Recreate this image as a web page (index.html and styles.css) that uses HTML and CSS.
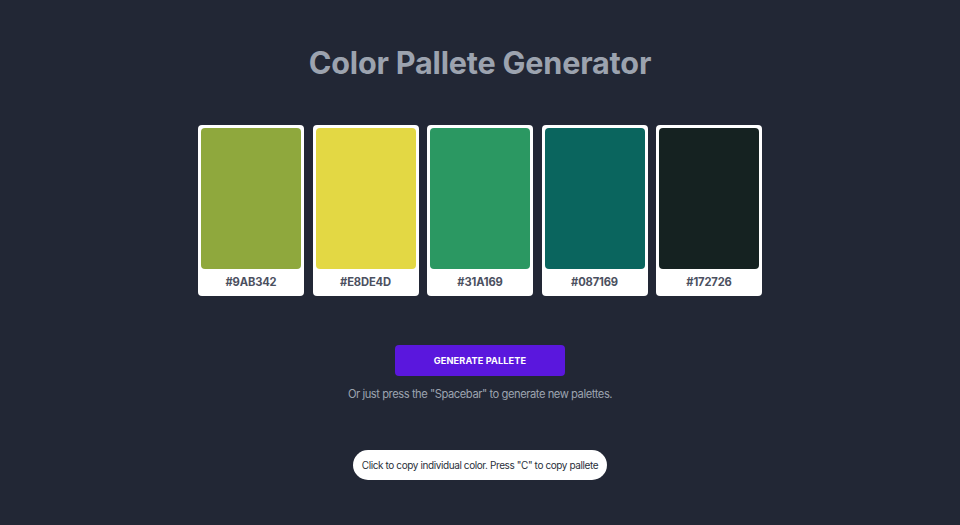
FILE: index.html
```html
<!DOCTYPE html>
<html lang="en">
<head>
<meta charset="utf-8">
<title>Color Pallete Generator</title>
<link rel="stylesheet" href="styles.css">
</head>
<body>
<main class="app">
  <h1 class="title">Color Pallete Generator</h1>
  <div class="palette">
    <div class="card"><div class="swatch" style="background:#8fa83d"></div><div class="hex">#9AB342</div></div>
    <div class="card"><div class="swatch" style="background:#e3d844"></div><div class="hex">#E8DE4D</div></div>
    <div class="card"><div class="swatch" style="background:#2b9862"></div><div class="hex">#31A169</div></div>
    <div class="card"><div class="swatch" style="background:#0a655e"></div><div class="hex">#087169</div></div>
    <div class="card"><div class="swatch" style="background:#152221"></div><div class="hex">#172726</div></div>
  </div>
  <button class="generate">Generate Pallete</button>
  <p class="hint">Or just press the "Spacebar" to generate new palettes.</p>
  <div class="toast">Click to copy individual color. Press "C" to copy pallete</div>
</main>
</body>
</html>
```
FILE: styles.css
```css
html, body {
  margin: 0;
  padding: 0;
  height: 100%;
}
body {
  background: #222735;
  font-family: Inter, "Noto Sans", sans-serif;
}
.app {
  display: flex;
  flex-direction: column;
  align-items: center;
  padding-top: 42px;
}
.title {
  margin: 0;
  font-size: 30.6px;
  line-height: 42px;
  font-weight: 700;
  color: #9ca3af;
  letter-spacing: -0.2px;
}
.palette {
  display: flex;
  gap: 8.5px;
  margin-top: 41px;
}
.card {
  width: 106px;
  height: 171px;
  box-sizing: border-box;
  background: #fff;
  border-radius: 4px;
  padding: 3px;
  display: flex;
  flex-direction: column;
}
.swatch {
  height: 141px;
  border-radius: 4px;
}
.hex {
  flex: 1;
  display: flex;
  align-items: center;
  justify-content: center;
  font-size: 11.2px;
  font-weight: 700;
  color: #4b5060;
  letter-spacing: -0.15px;
  padding-top: 1px;
}
.generate {
  margin-top: 49px;
  width: 170px;
  height: 31px;
  border: none;
  border-radius: 4px;
  background: #5a17dd;
  color: #fff;
  font-family: Inter, "Noto Sans", sans-serif;
  font-size: 9.2px;
  font-weight: 700;
  text-transform: uppercase;
  letter-spacing: 0.1px;
}
.hint {
  margin: 10px 0 0;
  font-size: 11.2px;
  line-height: 16px;
  color: #9ca3af;
  letter-spacing: -0.45px;
}
.toast {
  margin-top: 48px;
  background: #fff;
  border-radius: 16px;
  height: 30px;
  padding: 0 9px;
  display: flex;
  align-items: center;
  font-size: 10px;
  letter-spacing: -0.4px;
  color: #2a2f3a;
}
```
